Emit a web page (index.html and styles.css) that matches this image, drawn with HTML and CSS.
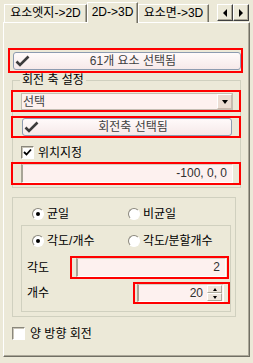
FILE: index.html
```html
<!DOCTYPE html>
<html>
<head>
  <title>2D-&gt;3D</title>
  <link rel="stylesheet" href="styles.css">
</head>
<body>
  <div class="window">
    <div class="tabs">
      <div class="tab tab-edge">요소엣지-&gt;2D</div>
      <div class="tab tab-active">2D-&gt;3D</div>
      <div class="tab tab-face">요소면-&gt;3D</div>
      <div class="tab-arrows">
        <span class="arrow-btn"><span class="tri tri-left"></span></span>
        <span class="arrow-btn"><span class="tri tri-right"></span></span>
      </div>
    </div>

    <div class="panel">
      <!-- selected elements -->
      <div class="mark mark-top">
        <button class="check-btn btn-wide">
          <svg class="tick" width="15" height="12" viewBox="0 0 15 12"><path d="M1.5 6.5 L5 10 L13.5 1.5" fill="none" stroke="#3c3c3c" stroke-width="2.6"/></svg>
          <span class="btn-text">61개 요소 선택됨</span>
        </button>
      </div>

      <fieldset class="group group-axis">
        <legend>회전 축 설정</legend>
        <div class="mark mark-combo">
          <div class="combo">
            <span>선택</span>
            <span class="drop"><span class="tri tri-down"></span></span>
          </div>
        </div>
        <div class="mark mark-axis">
          <button class="check-btn btn-axis">
            <svg class="tick" width="15" height="12" viewBox="0 0 15 12"><path d="M1.5 6.5 L5 10 L13.5 1.5" fill="none" stroke="#3c3c3c" stroke-width="2.6"/></svg>
            <span class="btn-text">회전축 선택됨</span>
          </button>
        </div>
        <div class="check-row check-pos">
          <span class="box"><svg width="9" height="9" viewBox="0 0 9 9"><path d="M1 4 L3.5 6.5 L8 1.5" fill="none" stroke="#000" stroke-width="1.8"/></svg></span>
          <span>위치지정</span>
        </div>
        <div class="mark mark-pos">
          <div class="edit edit-pos">-100, 0, 0</div>
        </div>
      </fieldset>

      <fieldset class="group group-mode">
        <div class="radio-row row-outer">
          <div class="radio-item"><span class="radio on"></span><span>균일</span></div>
          <div class="radio-item"><span class="radio"></span><span>비균일</span></div>
        </div>
        <fieldset class="group group-inner">
          <div class="radio-row row-inner">
            <div class="radio-item"><span class="radio on"></span><span>각도/개수</span></div>
            <div class="radio-item"><span class="radio"></span><span>각도/분할개수</span></div>
          </div>
          <div class="field-row row-angle">
            <span class="field-label">각도</span>
            <div class="mark mark-angle">
              <div class="edit edit-angle">2</div>
            </div>
          </div>
          <div class="field-row row-count">
            <span class="field-label label-count">개수</span>
            <div class="mark mark-count">
              <div class="edit edit-count">
                <span class="count-value">20</span>
                <span class="spinner">
                  <span class="spin-btn"><span class="tri tri-up"></span></span>
                  <span class="spin-btn"><span class="tri tri-down small"></span></span>
                </span>
              </div>
            </div>
          </div>
        </fieldset>
      </fieldset>

      <div class="check-row check-both">
        <span class="box"></span>
        <span>양 방향 회전</span>
      </div>
    </div>
  </div>
</body>
</html>
```

FILE: styles.css
```css
/* dialog base */
body {
  margin: 0;
  background-color: #ece9d8;
  font-family: "Liberation Sans", "Noto Sans CJK KR", sans-serif;
  font-size: 12px;
  line-height: 14px;
  color: #000;
}
.window {
  width: 253px;
  height: 363px;
}

/* tab strip */
.tabs {
  display: flex;
  align-items: flex-end;
  height: 22px;
  padding-left: 4px;
}
.tab {
  box-sizing: border-box;
  height: 18px;
  border: 1px solid;
  border-bottom: none;
  border-color: #fff #716f64 #716f64 #fff;
  box-shadow: inset -1px 0 #aca899;
  text-align: center;
  line-height: 16px;
  white-space: nowrap;
}
.tab-edge {
  width: 83px;
}
.tab-active {
  position: relative;
  z-index: 1;
  width: 51px;
  height: 21px;
  margin-bottom: -1px;
  background-color: #ece9d8;
  line-height: 19px;
}
.tab-face {
  width: 71px;
}
.tab-arrows {
  display: flex;
  align-self: flex-start;
  margin: 4px 4px 0 auto;
}
.arrow-btn {
  box-sizing: border-box;
  width: 16px;
  height: 17px;
  display: flex;
  align-items: center;
  justify-content: center;
  border: 1px solid;
  border-color: #fff #404040 #404040 #fff;
  box-shadow: inset -1px -1px #aca899;
}

/* little triangles */
.tri {
  width: 0;
  height: 0;
  border-style: solid;
}
.tri-left {
  border-width: 4px 4px 4px 0;
  border-color: transparent #000 transparent transparent;
}
.tri-right {
  border-width: 4px 0 4px 4px;
  border-color: transparent transparent transparent #000;
}
.tri-down {
  border-width: 4px 3.5px 0 3.5px;
  border-color: #000 transparent transparent transparent;
}
.tri-up {
  border-width: 0 2.5px 3px 2.5px;
  border-color: transparent transparent #000 transparent;
}
.tri-down.small {
  border-width: 3px 2.5px 0 2.5px;
}

/* tab page */
.panel {
  box-sizing: border-box;
  width: 247px;
  height: 335px;
  margin-left: 3px;
  border: 1px solid;
  border-color: #fff #716f64 #716f64 #fff;
  box-shadow: inset -1px -1px #aca899;
}

/* red highlight boxes */
.mark {
  box-sizing: border-box;
  border: 2px solid #ff0000;
}
.mark-top {
  width: 235px;
  height: 25px;
  margin: 25px 0 0 4px;
}
.mark-combo {
  height: 22px;
  margin: 3px -1px 0 -2px;
}
.mark-axis {
  height: 22px;
  margin: 4px -1px 0 -2px;
}
.mark-pos {
  height: 23px;
  margin: 3px -1px 0 -2px;
}

/* buttons with a tick */
.check-btn {
  box-sizing: border-box;
  display: flex;
  align-items: center;
  height: 18px;
  padding: 0 0 0 1px;
  border: 1px solid #8d9bb0;
  border-radius: 3px;
  background: linear-gradient(#fffafa, #f6e9e9);
  font: inherit;
  color: #404040;
}
.btn-wide {
  width: 228px;
  margin: 2px 0 0 3px;
}
.btn-axis {
  width: 210px;
  margin: 0 0 0 9px;
}
.tick {
  flex: none;
}
.btn-text {
  flex: 1;
  text-align: center;
  padding-right: 4px;
}

/* group boxes */
.group {
  box-sizing: border-box;
  min-width: 0;
  margin: 0;
  border: 1px solid #d0d0bf;
}
.group legend {
  margin-left: 7px;
  padding: 0 2px;
  line-height: 14px;
}
.group-axis {
  width: 229px;
  margin-left: 8px;
  padding: 0 0 2px 0;
}
.group-mode {
  width: 224px;
  margin: 9px 0 0 8px;
  padding: 9px 0 4px 0;
}
.group-inner {
  width: 210px;
  margin: 5px 0 0 8px;
  padding: 8px 0 7px 0;
}

/* combo box */
.combo {
  box-sizing: border-box;
  display: flex;
  align-items: center;
  width: 212px;
  height: 17px;
  margin: 1px 0 0 8px;
  padding-left: 1px;
  border: 1px solid #c3bdb2;
  background-color: #fdf1ef;
  color: #404040;
}
.drop {
  box-sizing: border-box;
  display: flex;
  align-items: center;
  justify-content: center;
  width: 15px;
  height: 15px;
  margin-left: auto;
  border: 1px solid;
  border-color: #fff #c9b9ad #c9b9ad #fff;
  background-color: #ebddd3;
}

/* text fields */
.edit {
  box-sizing: border-box;
  height: 19px;
  border-style: solid;
  border-width: 1px 1px 1px 2px;
  border-color: #d6d0c4 #fff #fff #a8a496;
  background-color: #fdf1ef;
  text-align: right;
  padding-right: 5px;
  line-height: 17px;
  color: #303030;
}
.edit-pos {
  width: 212px;
  margin: 0 0 0 8px;
}

/* check boxes */
.check-row {
  display: flex;
  align-items: center;
  gap: 4px;
  height: 13px;
}
.check-pos {
  margin: 8px 0 0 8px;
}
.check-both {
  margin: 10px 0 0 8px;
  gap: 5px;
}
.box {
  box-sizing: border-box;
  width: 13px;
  height: 13px;
  display: flex;
  align-items: center;
  justify-content: center;
  border: 1px solid;
  border-color: #8a877c #fff #fff #8a877c;
  box-shadow: inset 1px 1px #c9c5b8;
  background-color: #fff;
}

/* radio buttons */
.radio-row {
  display: flex;
  height: 13px;
  align-items: center;
}
.row-outer {
  margin-left: 19px;
}
.row-inner {
  margin-left: 10px;
}
.radio-item {
  display: flex;
  align-items: center;
  gap: 3px;
}
.radio-item:first-child {
  width: 96px;
}
.radio {
  box-sizing: border-box;
  width: 12px;
  height: 12px;
  display: flex;
  align-items: center;
  justify-content: center;
  border: 1px solid;
  border-color: #8a877c #fff #fff #8a877c;
  border-radius: 50%;
  background-color: #fff;
}
.radio.on::after {
  content: "";
  width: 4px;
  height: 4px;
  border-radius: 50%;
  background-color: #000;
}

/* angle / count rows */
.field-row {
  display: flex;
  align-items: center;
}
.field-label {
  width: 43px;
  margin-left: 5px;
}
.label-count {
  width: 106px;
}
.row-angle {
  margin-top: 9px;
}
.row-count {
  margin-top: 3px;
}
.mark-angle {
  width: 159px;
  height: 23px;
}
.edit-angle {
  width: 150px;
  margin: 0 0 0 4px;
}
.mark-count {
  width: 97px;
  height: 22px;
}
.edit-count {
  display: flex;
  align-items: center;
  width: 87px;
  height: 18px;
  margin: 0 0 0 2px;
  padding-right: 1px;
}
.count-value {
  flex: 1;
  padding-right: 4px;
}
.spinner {
  display: flex;
  flex-direction: column;
  width: 15px;
  height: 16px;
}
.spin-btn {
  box-sizing: border-box;
  flex: 1;
  display: flex;
  align-items: center;
  justify-content: center;
  border: 1px solid;
  border-color: #fff #aca899 #aca899 #fff;
  background-color: #efe6dc;
}
```
